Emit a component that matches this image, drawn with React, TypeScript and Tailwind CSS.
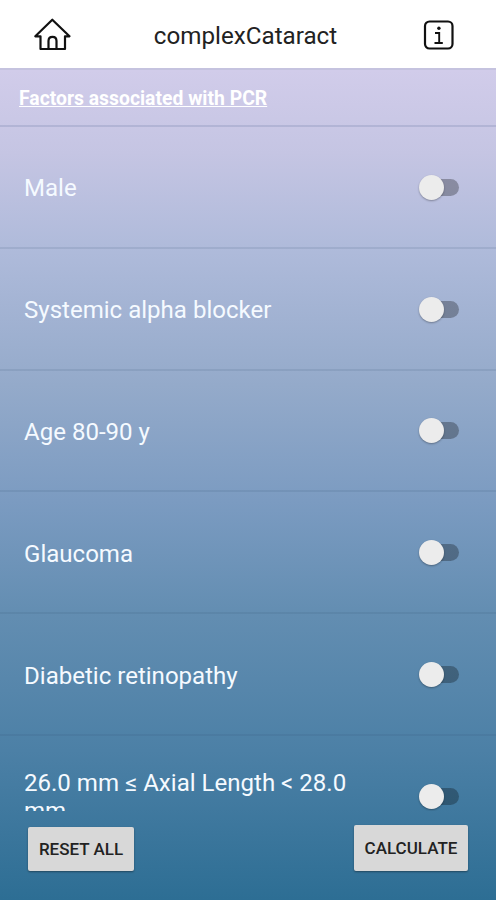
import { useState } from "react";

const factors = [
  "Male",
  "Systemic alpha blocker",
  "Age 80-90 y",
  "Glaucoma",
  "Diabetic retinopathy",
  "26.0 mm ≤ Axial Length < 28.0 mm",
];

function HomeIcon() {
  return (
    <svg width="38" height="34" viewBox="0 0 38 34" fill="none" stroke="#111" strokeWidth="2.200" strokeLinejoin="round" strokeLinecap="round">
      <path d="M19.300 1.700 L2.300 18.300 H7.500 V31 H32 V18.300 H36.500 Z" />
      <path d="M15.500 31 V23 Q15.500 18.800 19.500 18.800 Q23.500 18.800 23.500 23 V31" />
    </svg>
  );
}

function InfoIcon() {
  return (
    <svg width="32" height="32" viewBox="0 0 32 32" fill="none" stroke="#111" strokeWidth="2.200">
      <rect x="2" y="2.500" width="27.500" height="27" rx="4.500" />
      <circle cx="15.900" cy="9.300" r="1.700" fill="#111" stroke="none" />
      <path d="M12 14 H16.200 V24 M11.500 24 H19.800" strokeWidth="1.900" />
    </svg>
  );
}

function Toggle({ on, onClick }: { on: boolean; onClick: () => void }) {
  return (
    <button role="switch" aria-checked={on} onClick={onClick} className="mt-px flex h-[25px] w-[40px] shrink-0 items-center">
      <span className="flex h-[17px] w-full items-center rounded-full bg-[linear-gradient(to_right,transparent_10px,#00000048_10px)]">
        <span className={`size-[25px] rounded-full bg-[#ececec] shadow-[0_1px_2px_#00000050] ${on ? "ml-4" : ""}`} />
      </span>
    </button>
  );
}

export default function App() {
  const [state, setState] = useState<boolean[]>(factors.map(() => false));
  return (
    <div className="flex h-[900px] w-[496px] flex-col overflow-hidden bg-white font-[Roboto,sans-serif]">
      <header className="flex h-[68px] shrink-0 items-center justify-between pt-0.5 pr-[41px] pl-[33px]">
        <HomeIcon />
        <h1 className="-ml-[3px] pt-px text-[24.2px] leading-[30px] text-[#222]">complexCataract</h1>
        <InfoIcon />
      </header>
      <main className="flex min-h-0 flex-1 flex-col border-t-2 border-[#c5c3df] bg-[linear-gradient(to_bottom,#d1ccea_0%,#c5c5e3_10%,#aebada_22%,#94aaca_38%,#7b9bc1_52%,#628db1_66%,#4c80a6_82%,#3b769c_92%,#2d6e94_100%)]">
        <h2 className="flex h-[57px] shrink-0 items-center border-b-2 border-[#5060902e] pt-[3px] pl-[19px] text-[19.35px] font-bold text-white underline decoration-1">
          Factors associated with PCR
        </h2>
        <div className="h-[684px] shrink-0 overflow-hidden">
          {factors.map((name, i) => (
            <div key={name} className="flex h-[121.8px] items-center justify-between border-b-2 border-[#30507020] pr-[37px] pl-6">
              <span className="w-[340px] pt-[3px] text-[24.05px] leading-[28px] text-[#f5faff]">{name}</span>
              <Toggle on={state[i]} onClick={() => setState(state.map((v, j) => (j === i ? !v : v)))} />
            </div>
          ))}
        </div>
        <footer className="flex flex-1 items-start justify-between pt-[14px] pr-[28px] pl-7">
          <button
            onClick={() => setState(factors.map(() => false))}
            className="mt-0.5 h-11 w-[106px] rounded-xs bg-[#d8d8d8] pt-0.5 text-[17px] font-medium text-[#222] shadow-[0_1px_2px_#00000060]"
          >
            RESET ALL
          </button>
          <button className="h-[46px] w-[114px] rounded-xs bg-[#d8d8d8] pt-0.5 text-[17px] font-medium text-[#222] shadow-[0_1px_2px_#00000060]">
            CALCULATE
          </button>
        </footer>
      </main>
    </div>
  );
}
